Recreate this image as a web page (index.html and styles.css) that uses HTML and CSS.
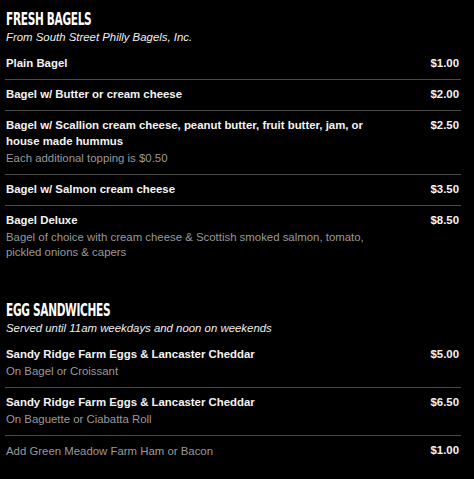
FILE: index.html
```html
<!DOCTYPE html>
<html>
<head>
<meta charset="utf-8">
<link rel="stylesheet" href="styles.css">
</head>
<body>
<div class="menu">
  <section class="section">
    <h2 class="heading"><span class="heading-text">FRESH BAGELS</span></h2>
    <p class="note">From South Street Philly Bagels, Inc.</p>
    <ul class="items">
      <li class="item"><div class="info"><div class="name">Plain Bagel</div></div><div class="price">$1.00</div></li>
      <li class="item"><div class="info"><div class="name">Bagel w/ Butter or cream cheese</div></div><div class="price">$2.00</div></li>
      <li class="item"><div class="info"><div class="name">Bagel w/ Scallion cream cheese, peanut butter, fruit butter, jam, or house made hummus</div><div class="desc">Each additional topping is $0.50</div></div><div class="price">$2.50</div></li>
      <li class="item"><div class="info"><div class="name">Bagel w/ Salmon cream cheese</div></div><div class="price">$3.50</div></li>
      <li class="item last"><div class="info"><div class="name">Bagel Deluxe</div><div class="desc">Bagel of choice with cream cheese &amp; Scottish smoked salmon, tomato, pickled onions &amp; capers</div></div><div class="price">$8.50</div></li>
    </ul>
  </section>
  <section class="section second">
    <h2 class="heading"><span class="heading-text">EGG SANDWICHES</span></h2>
    <p class="note">Served until 11am weekdays and noon on weekends</p>
    <ul class="items">
      <li class="item"><div class="info"><div class="name">Sandy Ridge Farm Eggs &amp; Lancaster Cheddar</div><div class="desc">On Bagel or Croissant</div></div><div class="price">$5.00</div></li>
      <li class="item"><div class="info"><div class="name">Sandy Ridge Farm Eggs &amp; Lancaster Cheddar</div><div class="desc">On Baguette or Ciabatta Roll</div></div><div class="price">$6.50</div></li>
      <li class="item last"><div class="info"><div class="addon">Add Green Meadow Farm Ham or Bacon</div></div><div class="price">$1.00</div></li>
    </ul>
  </section>
</div>
</body>
</html>
```

FILE: styles.css
```css
html, body {
  margin: 0;
  padding: 0;
  background: #000;
}
body {
  font-family: "Liberation Sans", Arial, sans-serif;
  color: #f2f2f2;
  font-size: 11.4px;
}
.menu {
  padding: 9px 13px 0 5px;
}
.section.second {
  margin-top: 32px;
}
.heading {
  margin: 0 0 0 1px;
  height: 20px;
  font-family: "DejaVu Sans Condensed", "DejaVu Sans", sans-serif;
  font-stretch: condensed;
  font-weight: bold;
  font-size: 18.5px;
  line-height: 20px;
  letter-spacing: -0.5px;
  color: #fff;
  white-space: nowrap;
}
.heading-text {
  display: inline-block;
  transform: scaleX(0.635);
  transform-origin: left center;
}
.note {
  margin: 0 0 0 1px;
  font-style: italic;
  line-height: 16px;
  color: #f0f0f0;
}
.items {
  list-style: none;
  margin: 4px 0 0;
  padding: 0;
}
.item {
  display: flex;
  justify-content: space-between;
  align-items: flex-start;
  padding: 6px 2px 8px 1px;
  border-bottom: 1px solid #4a4a4a;
}
.item.last {
  border-bottom: none;
}
.info {
  width: 375px;
}
.name {
  font-weight: bold;
  line-height: 16px;
  color: #f4f4f4;
}
.desc {
  margin-top: 2px;
  line-height: 15px;
  color: #9a9a9a;
}
.addon {
  line-height: 16px;
  padding-top: 1px;
  color: #9a9a9a;
}
.price {
  font-weight: bold;
  line-height: 16px;
  color: #f4f4f4;
}
```
